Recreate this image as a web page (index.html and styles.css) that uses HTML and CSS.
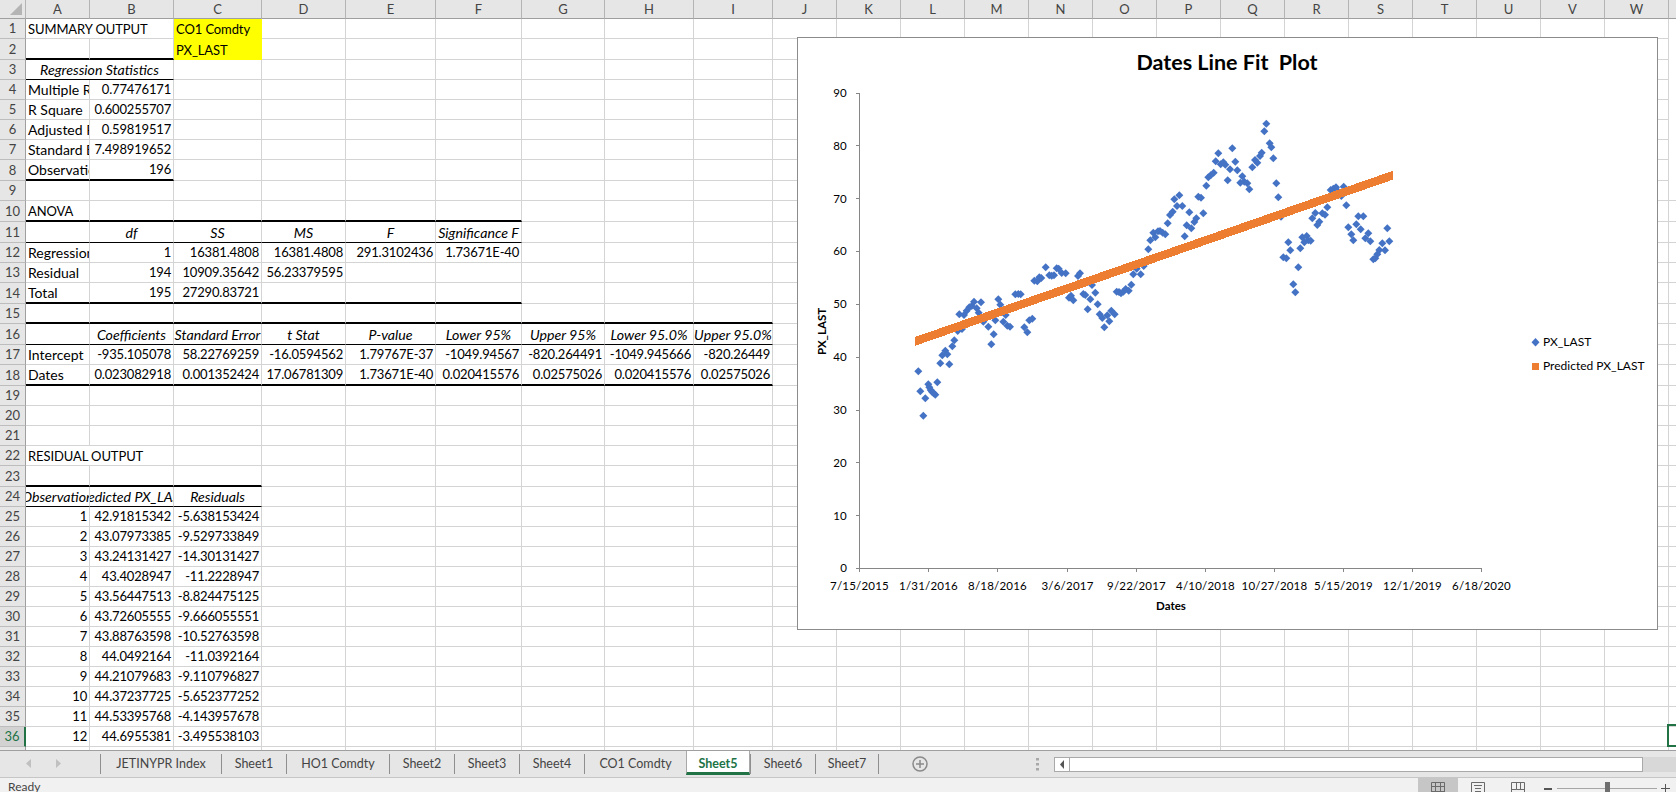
FILE: index.html
```html
<!DOCTYPE html>
<html lang="en">
<head>
<meta charset="utf-8">
<title>Sheet5 - Excel</title>
<link rel="stylesheet" href="styles.css">
</head>
<body>
<div class="app">
<main class="sheet">
<table class="grid">
<colgroup><col class="c26"><col class="c64"><col class="c84"><col class="c88"><col class="c84"><col class="c90"><col class="c86"><col class="c83"><col class="c89"><col class="c79"><col class="c64"><col class="c64"><col class="c64"><col class="c64"><col class="c64"><col class="c64"><col class="c64"><col class="c64"><col class="c64"><col class="c64"><col class="c64"><col class="c64"><col class="c64"><col class="c64"><col class="c8"></colgroup>
<thead><tr class="rh"><th class="corner"><svg class="tri" width="13" height="12" viewBox="0 0 13 12"><path d="M12 0V12H0z"/></svg></th><th>A</th><th>B</th><th>C</th><th>D</th><th>E</th><th>F</th><th>G</th><th>H</th><th>I</th><th>J</th><th>K</th><th>L</th><th>M</th><th>N</th><th>O</th><th>P</th><th>Q</th><th>R</th><th>S</th><th>T</th><th>U</th><th>V</th><th>W</th><th></th></tr></thead>
<tbody>
<tr class="r20"><th>1</th><td colspan="2" class="u">SUMMARY OUTPUT<td class="y u">CO1 Comdty<td><td><td><td><td><td><td><td><td><td><td><td><td><td><td><td><td><td><td><td></tr>
<tr class="r21"><th>2</th><td class="tk"><td class="tk"><td class="y u">PX_LAST<td><td><td><td><td><td><td><td><td><td><td><td><td><td><td><td><td><td><td><td></tr>
<tr class="r20"><th>3</th><td colspan="2" class="h tn"><div>Regression Statistics</div><td><td><td><td><td><td><td><td><td><td><td><td><td><td><td><td><td><td><td><td><td></tr>
<tr class="r20"><th>4</th><td>Multiple R<td class="n">0.77476171<td><td><td><td><td><td><td><td><td><td><td><td><td><td><td><td><td><td><td><td><td></tr>
<tr class="r20"><th>5</th><td>R Square<td class="n">0.600255707<td><td><td><td><td><td><td><td><td><td><td><td><td><td><td><td><td><td><td><td><td></tr>
<tr class="r20"><th>6</th><td>Adjusted R Square<td class="n">0.59819517<td><td><td><td><td><td><td><td><td><td><td><td><td><td><td><td><td><td><td><td><td></tr>
<tr class="r20"><th>7</th><td>Standard Error<td class="n">7.498919652<td><td><td><td><td><td><td><td><td><td><td><td><td><td><td><td><td><td><td><td><td></tr>
<tr class="r21"><th>8</th><td class="tk">Observations<td class="n tk">196<td><td><td><td><td><td><td><td><td><td><td><td><td><td><td><td><td><td><td><td><td></tr>
<tr class="r20"><th>9</th><td><td><td><td><td><td><td><td><td><td><td><td><td><td><td><td><td><td><td><td><td><td><td><td></tr>
<tr class="r20"><th>10</th><td class="tk u">ANOVA<td class="tk"><td class="tk"><td class="tk"><td class="tk"><td class="tk"><td><td><td><td><td><td><td><td><td><td><td><td><td><td><td><td><td><td></tr>
<tr class="r21"><th>11</th><td class="tn"><td class="tn h"><div>df</div><td class="tn h"><div>SS</div><td class="tn h"><div>MS</div><td class="tn h"><div>F</div><td class="tn h"><div>Significance F</div><td><td><td><td><td><td><td><td><td><td><td><td><td><td><td><td><td><td></tr>
<tr class="r20"><th>12</th><td>Regression<td class="n">1<td class="n">16381.4808<td class="n">16381.4808<td class="n">291.3102436<td class="n">1.73671E-40<td><td><td><td><td><td><td><td><td><td><td><td><td><td><td><td><td><td></tr>
<tr class="r20"><th>13</th><td>Residual<td class="n">194<td class="n">10909.35642<td class="n">56.23379595<td><td><td><td><td><td><td><td><td><td><td><td><td><td><td><td><td><td><td><td></tr>
<tr class="r21"><th>14</th><td class="tk">Total<td class="n tk">195<td class="n tk">27290.83721<td class="tk"><td class="tk"><td class="tk"><td><td><td><td><td><td><td><td><td><td><td><td><td><td><td><td><td><td></tr>
<tr class="r20"><th>15</th><td class="tk"><td class="tk"><td class="tk"><td class="tk"><td class="tk"><td class="tk"><td class="tk"><td class="tk"><td class="tk"><td><td><td><td><td><td><td><td><td><td><td><td><td><td><td></tr>
<tr class="r21"><th>16</th><td class="tn"><td class="tn h"><div>Coefficients</div><td class="tn h"><div>Standard Error</div><td class="tn h"><div>t Stat</div><td class="tn h"><div>P-value</div><td class="tn h"><div>Lower 95%</div><td class="tn h"><div>Upper 95%</div><td class="tn h"><div>Lower 95.0%</div><td class="tn h"><div>Upper 95.0%</div><td><td><td><td><td><td><td><td><td><td><td><td><td><td><td><td></tr>
<tr class="r20"><th>17</th><td>Intercept<td class="n">-935.105078<td class="n">58.22769259<td class="n">-16.0594562<td class="n">1.79767E-37<td class="n">-1049.94567<td class="n">-820.264491<td class="n">-1049.945666<td class="n">-820.26449<td><td><td><td><td><td><td><td><td><td><td><td><td><td><td><td></tr>
<tr class="r21"><th>18</th><td class="tk">Dates<td class="n tk">0.023082918<td class="n tk">0.001352424<td class="n tk">17.06781309<td class="n tk">1.73671E-40<td class="n tk">0.020415576<td class="n tk">0.02575026<td class="n tk">0.020415576<td class="n tk">0.02575026<td><td><td><td><td><td><td><td><td><td><td><td><td><td><td><td></tr>
<tr class="r20"><th>19</th><td><td><td><td><td><td><td><td><td><td><td><td><td><td><td><td><td><td><td><td><td><td><td><td></tr>
<tr class="r20"><th>20</th><td><td><td><td><td><td><td><td><td><td><td><td><td><td><td><td><td><td><td><td><td><td><td><td></tr>
<tr class="r20"><th>21</th><td><td><td><td><td><td><td><td><td><td><td><td><td><td><td><td><td><td><td><td><td><td><td><td></tr>
<tr class="r20"><th>22</th><td colspan="2" class="u">RESIDUAL OUTPUT<td><td><td><td><td><td><td><td><td><td><td><td><td><td><td><td><td><td><td><td><td><td></tr>
<tr class="r21"><th>23</th><td class="tk"><td class="tk"><td class="tk"><td><td><td><td><td><td><td><td><td><td><td><td><td><td><td><td><td><td><td><td><td></tr>
<tr class="r20"><th>24</th><td class="tn h"><div>Observation</div><td class="tn h"><div>Predicted PX_LAST</div><td class="tn h"><div>Residuals</div><td><td><td><td><td><td><td><td><td><td><td><td><td><td><td><td><td><td><td><td><td></tr>
<tr class="r20"><th>25</th><td class="n">1<td class="n">42.91815342<td class="n">-5.638153424<td><td><td><td><td><td><td><td><td><td><td><td><td><td><td><td><td><td><td><td><td></tr>
<tr class="r20"><th>26</th><td class="n">2<td class="n">43.07973385<td class="n">-9.529733849<td><td><td><td><td><td><td><td><td><td><td><td><td><td><td><td><td><td><td><td><td></tr>
<tr class="r20"><th>27</th><td class="n">3<td class="n">43.24131427<td class="n">-14.30131427<td><td><td><td><td><td><td><td><td><td><td><td><td><td><td><td><td><td><td><td><td></tr>
<tr class="r20"><th>28</th><td class="n">4<td class="n">43.4028947<td class="n">-11.2228947<td><td><td><td><td><td><td><td><td><td><td><td><td><td><td><td><td><td><td><td><td></tr>
<tr class="r20"><th>29</th><td class="n">5<td class="n">43.56447513<td class="n">-8.824475125<td><td><td><td><td><td><td><td><td><td><td><td><td><td><td><td><td><td><td><td><td></tr>
<tr class="r20"><th>30</th><td class="n">6<td class="n">43.72605555<td class="n">-9.666055551<td><td><td><td><td><td><td><td><td><td><td><td><td><td><td><td><td><td><td><td><td></tr>
<tr class="r20"><th>31</th><td class="n">7<td class="n">43.88763598<td class="n">-10.52763598<td><td><td><td><td><td><td><td><td><td><td><td><td><td><td><td><td><td><td><td><td></tr>
<tr class="r20"><th>32</th><td class="n">8<td class="n">44.0492164<td class="n">-11.0392164<td><td><td><td><td><td><td><td><td><td><td><td><td><td><td><td><td><td><td><td><td></tr>
<tr class="r20"><th>33</th><td class="n">9<td class="n">44.21079683<td class="n">-9.110796827<td><td><td><td><td><td><td><td><td><td><td><td><td><td><td><td><td><td><td><td><td></tr>
<tr class="r20"><th>34</th><td class="n">10<td class="n">44.37237725<td class="n">-5.652377252<td><td><td><td><td><td><td><td><td><td><td><td><td><td><td><td><td><td><td><td><td></tr>
<tr class="r20"><th>35</th><td class="n">11<td class="n">44.53395768<td class="n">-4.143957678<td><td><td><td><td><td><td><td><td><td><td><td><td><td><td><td><td><td><td><td><td></tr>
<tr class="r20"><th class="sel">36</th><td class="n">12<td class="n">44.6955381<td class="n">-3.495538103<td><td><td><td><td><td><td><td><td><td><td><td><td><td><td><td><td><td><td><td><td></tr>
<tr class="r20"><th></th><td><td><td><td><td><td><td><td><td><td><td><td><td><td><td><td><td><td><td><td><td><td><td><td></tr>
</tbody>
</table>

<div class="cursor"></div>

<figure class="chart">
<svg width="859" height="591" viewBox="798 38 859 591">
<defs>
<marker id="dia" markerUnits="userSpaceOnUse" markerWidth="26" markerHeight="26" viewBox="-13 -13 26 26" refX="0" refY="0"><path class="blue" d="M0-12 12 0 0 12-12 0z"/></marker>
</defs>
<text class="title" x="1227" y="70">Dates Line Fit  Plot</text>

<path class="axis" d="M859.5 93V568.5H1481.5"/>
<path class="axis" d="M856 93.5h3.5M856 145.5h3.5M856 198.5h3.5M856 251.5h3.500M856 304.5h3.5M856 357.5h3.5M856 410.5h3.5M856 462.5h3.5M856 515.5h3.5M856 568.5h3.5"/>
<path class="axis" d="M859.5 568v4M928.5 568v4M997.5 568v4M1067.5 568v4M1136.5 568v4M1205.5 568v4M1274.5 568v4M1343.5 568v4M1412.5 568v4M1481.5 568v4"/>

<g class="yl">
<text x="847" y="97">90</text><text x="847" y="150">80</text><text x="847" y="203">70</text><text x="847" y="255">60</text><text x="847" y="308">50</text><text x="847" y="361">40</text><text x="847" y="414">30</text><text x="847" y="467">20</text><text x="847" y="520">10</text><text x="847" y="572">0</text>
</g>
<g class="xl">
<text x="859.5" y="590">7/15/2015</text><text x="928.5" y="590">1/31/2016</text><text x="997.5" y="590">8/18/2016</text><text x="1067.5" y="590">3/6/2017</text><text x="1136.5" y="590">9/22/2017</text><text x="1205.5" y="590">4/10/2018</text><text x="1274.5" y="590">10/27/2018</text><text x="1343.5" y="590">5/15/2019</text><text x="1412.5" y="590">12/1/2019</text><text x="1481.5" y="590">6/18/2020</text>
</g>
<text class="axt" x="1171" y="610">Dates</text>
<text class="axt" transform="translate(826 331.5) rotate(-90)">PX_LAST</text>

<g transform="translate(790 330) scale(.33333)">
<polyline class="pts" marker-start="url(#dia)" marker-mid="url(#dia)" marker-end="url(#dia)" points="385,124 391,184 400,257 406,205 415,163 418,172 422,180 426,185 431,190 436,194 442,157 451,100 457,76 466,62 472,73 478,103 487,49 493,31 503,3 516,-3 604,43 611,13 712,7"/>
</g>
<g transform="translate(790 30) scale(.33333)">
<polyline class="pts" marker-start="url(#dia)" marker-mid="url(#dia)" marker-end="url(#dia)" points="508,853 522,855 530,842 538,832 545,828 552,815 560,835 566,848 573,817 580,875 595,890 616,871 625,808 631,824 640,875 647,855 652,887 660,890 676,793 685,792 692,793 703,892 718,871 727,866 733,752 742,754 748,742 754,744 767,712 778,736 785,737 792,736 800,715 806,716 815,729 827,730 837,803 843,797 850,811 864,738 870,730 880,792 886,795 893,838 901,808 906,765 916,788 923,823 929,853 937,864 943,892 952,856 958,874 964,842 974,853 980,785 987,786 993,790 1000,785 1007,777 1016,782 1024,764 1030,733 1040,716 1052,733 1061,708 1075,658 1081,631 1090,608 1096,622 1104,604 1110,603 1118,608 1126,613 1133,580 1140,555 1148,545 1153,508 1161,528 1168,496 1177,528 1184,619 1190,586 1198,547 1204,595 1213,576 1219,565 1225,500 1233,503 1240,550 1249,467 1255,442 1262,436 1271,428 1277,394 1285,370 1292,403 1300,397 1306,404 1313,451 1320,418 1327,355 1336,395 1342,421 1351,458 1357,439 1363,455 1372,460 1378,478 1387,412 1395,390 1402,398 1410,378 1415,368 1423,304 1429,281 1439,340 1444,352 1450,385 1459,460 1465,502"/>
</g>
<g transform="translate(1100 100) scale(.33333)">
<polyline class="pts" marker-start="url(#dia)" marker-mid="url(#dia)" marker-end="url(#dia)" points="543,350 550,472 559,475 565,427 571,451 580,553 586,577 595,502 601,445 607,412 613,427 620,408 625,421 632,422 637,355 646,339 652,375 658,365 667,340 675,344 682,322 692,270 700,266 708,262 715,275 724,288 731,260 739,316 745,382 754,403 760,421 769,373 775,349 782,388 790,349 796,415 805,400 811,424 820,478 826,475 832,463 838,450 847,430 855,451 862,385 868,424"/>
</g>

<polygon class="fit" points="915,337 1393,170.800 1393,179.600 915,345.800"/>

<path class="blue" d="M1535.5 338 1539.5 342.3 1535.5 346.6 1531.500 342.3z"/>
<text class="lg" x="1543" y="346">PX_LAST</text>
<rect class="orange" x="1532" y="363" width="7" height="7"/>
<text class="lg" x="1543" y="370">Predicted PX_LAST</text>
</svg>
</figure>
</main>

<nav class="tabbar">
<div class="nav">
<svg width="100" height="27" viewBox="0 0 100 27"><path class="navarrow" d="M31 8v9l-5-4.500zM56 8v9l5-4.500z"/></svg>
</div>
<div class="tabs">
<div class="tab t121">JETINYPR Index</div>
<div class="tab t65">Sheet1</div>
<div class="tab t103">HO1 Comdty</div>
<div class="tab t65">Sheet2</div>
<div class="tab t65">Sheet3</div>
<div class="tab t65">Sheet4</div>
<div class="tab t102">CO1 Comdty</div>
<div class="tab t64 active">Sheet5</div>
<div class="tab t65">Sheet6</div>
<div class="tab t64 last">Sheet7</div>
</div>
<svg class="add" width="16" height="16" viewBox="0 0 16 16"><circle cx="8" cy="8" r="7"/><path d="M8 4v8M4 8h8"/></svg>
<svg class="dots" width="3" height="13" viewBox="0 0 3 13"><path d="M0 0h3v2.500H0zM0 5h3v2.500H0zM0 10h3v2.500H0z"/></svg>
<div class="hscroll"><div class="hleft"><svg width="5" height="9" viewBox="0 0 5 9"><path d="M4 0v9L0 4.500z"/></svg></div></div>
<div class="htrack"></div>
</nav>

<footer class="status">
<span class="ready">Ready</span>
<div class="views">
<div class="vbtn on"><svg width="14" height="14" viewBox="0 0 14 14"><path d="M.5.500h13v13H.5zM4.500.5v13M9.500.5v13M.5 4.500h13M.5 9.500h13"/></svg></div>
<div class="vbtn"><svg width="14" height="14" viewBox="0 0 14 14"><path d="M.5.500h13v13H.5zM3 3.500h8M4 6.500h6M4 9.500h6"/></svg></div>
<div class="vbtn"><svg width="14" height="14" viewBox="0 0 14 14"><path d="M.5.500h13v13H.5zM5.500.5v7H.5M5.500 7.500h8M9.500.5v7"/></svg></div>
</div>
<div class="zoom">
<span class="zminus"></span>
<div class="zline"><span class="zthumb"></span></div>
<svg class="zplus" width="9" height="9" viewBox="0 0 9 9"><path d="M0 4.500h9M4.500 0v9"/></svg>
</div>
</footer>
</div>
</body>
</html>
```
FILE: styles.css
```css
* { box-sizing: border-box; }
html, body { margin: 0; padding: 0; height: 100%; overflow: hidden; background: #fff; }
body { font-family: Lato, "Open Sans", sans-serif; color: #000; }
.app { display: flex; flex-direction: column; width: 1676px; height: 792px; overflow: hidden; }

/* sheet grid */
.sheet { position: relative; height: 750px; flex: none; overflow: hidden; background: #fff; }
.grid { border-collapse: separate; border-spacing: 0; table-layout: fixed; width: 1677px; font-size: 14px; }
.c8 { width: 8px; } .c26 { width: 26px; } .c64 { width: 64px; } .c79 { width: 79px; } .c83 { width: 83px; }
.c84 { width: 84px; } .c86 { width: 86px; } .c88 { width: 88px; } .c89 { width: 89px; } .c90 { width: 90px; }
.r20 { height: 20px; } .r21 { height: 21px; } .rh { height: 19px; }
.grid td { padding: 1px 2px 1px; border: 0 solid #d4d4d4; border-right-width: 1px; border-bottom-width: 1px; overflow: hidden; white-space: nowrap; vertical-align: bottom; line-height: 17px; }
.grid th { padding: 1px 0 1px; font-size: 13px; font-weight: 400; background: #e6e6e6; color: #444; text-align: center; vertical-align: bottom; border: 0 solid #bdbdbd; border-right-width: 1px; border-bottom-width: 1px; line-height: 17px; overflow: hidden; }
.grid thead th { padding: 0; vertical-align: middle; border-bottom-color: #9f9f9f; border-right-color: #b4b4b4; }
.grid tbody th { border-right-color: #9f9f9f; }
.corner { position: relative; }
.tri { position: absolute; left: 10px; top: 3px; fill: #b4b4b4; }
.grid td.u { padding: 2px 2px 0; font-size: 13px; letter-spacing: -.1px; }
.grid td.n { text-align: right; font-size: 13px; letter-spacing: -.18px; }
.grid td.y { background: #ff0; border-color: #ff0; }
.grid td.tk { border-bottom: 2px solid #000; }
.grid td.tn { border-bottom: 1px solid #000; }
.grid td.h { font-style: italic; font-size: 14.2px; padding: 1px 0 1px; }
.h div { display: flex; justify-content: center; white-space: nowrap; overflow: hidden; }
.grid th.sel { background: #d2d2d2; color: #217346; border-right: 2px solid #217346; }
.cursor { position: absolute; left: 1667px; top: 724px; width: 20px; height: 23px; border: 2px solid #217346; }

/* chart */
.chart { position: absolute; left: 797px; top: 37px; width: 861px; height: 593px; margin: 0; background: #fff; border: 1px solid #8c8c8c; }
.chart svg { display: block; }
.chart text { fill: #000; font-family: Lato, "Open Sans", sans-serif; }
.title { font-size: 21.5px; font-weight: 700; text-anchor: middle; white-space: pre; }
.axis { fill: none; stroke: #868686; stroke-width: 1; }
.yl text { font-size: 11.5px; text-anchor: end; letter-spacing: .2px; }
.xl text { font-size: 11.5px; text-anchor: middle; letter-spacing: .2px; }
.axt { font-size: 11.5px; font-weight: 700; text-anchor: middle; }
.lg { font-size: 12px; }
.blue { fill: #4472c4; }
.orange { fill: #ed7d31; }
.pts { fill: none; stroke: none; }
.fit { fill: #ed7d31; shape-rendering: crispEdges; }

/* sheet tabs */
.tabbar { display: flex; align-items: flex-start; height: 28px; flex: none; background: #e6e6e6; border-top: 1px solid #9f9f9f; border-bottom: 1px solid #c6c6c6; }
.nav { width: 100px; flex: none; height: 26px; }
.nav svg { display: block; }
.navarrow { fill: #c0c0c0; }
.tabs { display: flex; flex: none; align-items: flex-start; }
.tab { height: 20px; margin-top: 3px; border-left: 1px solid #8f8f8f; font-size: 12.5px; line-height: 20px; color: #444; text-align: center; white-space: nowrap; }
.tab.last { border-right: 1px solid #8f8f8f; }
.t64 { width: 64px; } .t65 { width: 65px; } .t102 { width: 102px; } .t103 { width: 103px; } .t121 { width: 121px; }
.tab.active { margin-top: 0; height: 24px; line-height: 25px; padding-bottom: 3px; background: #fff; color: #217346; font-weight: 700; border-right: 1px solid #a8a8a8; border-left-color: #a8a8a8; border-bottom: 3px solid #217346; }
.add { flex: none; margin: 5px 0 0 33px; fill: none; stroke: #8a8a8a; stroke-width: 1.5; }
.dots { flex: none; margin: 7px 0 0 108px; fill: #a8a8a8; }
.hscroll { flex: none; width: 589px; height: 15px; margin: 6px 0 0 15px; background: #fff; border: 1px solid #a9a9a9; }
.hleft { width: 15px; height: 100%; border-right: 1px solid #a9a9a9; display: flex; align-items: center; justify-content: center; }
.hleft svg { fill: #555; }
.htrack { flex: 1; height: 15px; margin-top: 6px; background: #d8d8d8; }

/* status bar */
.status { display: flex; align-items: flex-start; height: 14px; flex: none; background: #f1f1f1; overflow: hidden; }
.ready { margin: 1px auto 0 8px; font-size: 12px; line-height: 16px; color: #444; }
.views { display: flex; height: 14px; }
.vbtn { width: 40px; height: 14px; display: flex; justify-content: center; padding-top: 4px; }
.vbtn.on { background: #c6c6c6; }
.vbtn svg { flex: none; fill: none; stroke: #6a6a6a; stroke-width: 1; }
.zoom { display: flex; align-items: center; width: 138px; height: 14px; padding-top: 7px; }
.zminus { width: 8px; height: 2px; margin-left: 6px; background: #555; flex: none; }
.zline { position: relative; width: 100px; height: 1px; margin-left: 5px; background: #a6a6a6; flex: none; }
.zthumb { position: absolute; left: 48px; top: -6px; width: 5px; height: 13px; background: #6f6f6f; }
.zplus { flex: none; margin-left: 4px; fill: none; stroke: #555; stroke-width: 1; }
```
